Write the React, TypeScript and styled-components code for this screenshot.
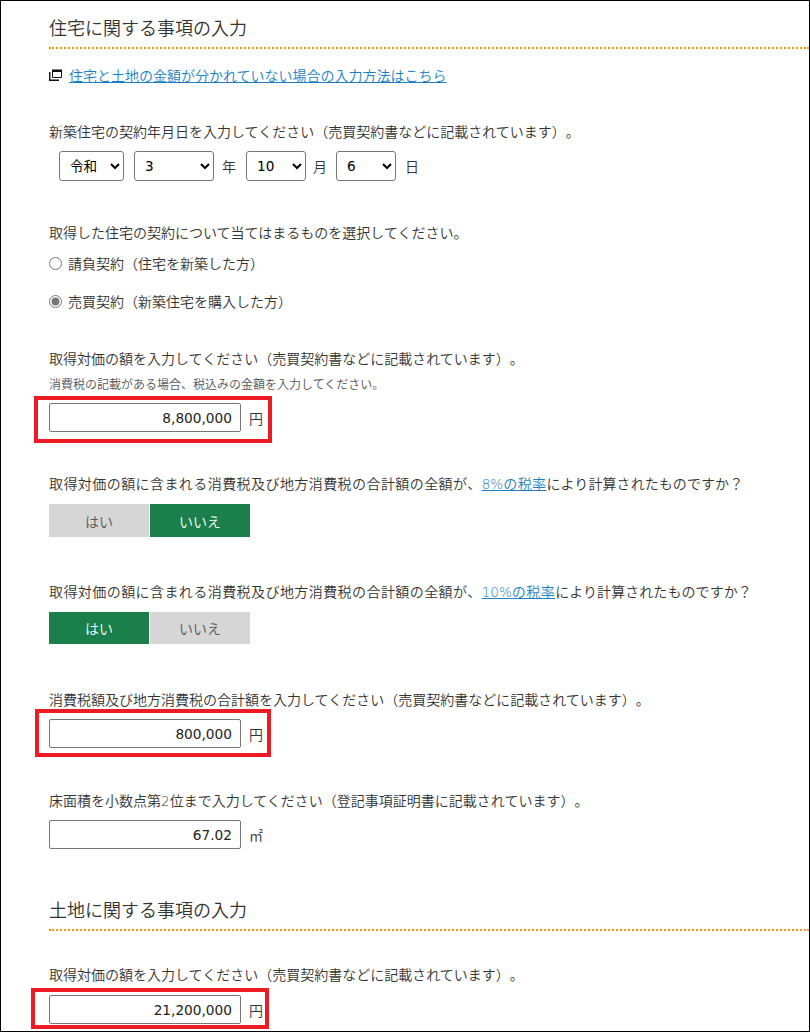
import React from "react";
import styled, { createGlobalStyle } from "styled-components";

const Global = createGlobalStyle`
  html, body { margin: 0; padding: 0; background: #fff; }
  * { box-sizing: border-box; }
`;

const FONT = `"Noto Sans CJK JP", "Noto Sans", sans-serif`;
const NUM_FONT = `"DejaVu Sans", "Noto Sans CJK JP", sans-serif`;

const Frame = styled.main`
  width: 810px;
  height: 1032px;
  border: 1px solid #000;
  overflow: hidden;
  padding-left: 48px;
  font-family: ${FONT};
  font-size: 14px;
  font-weight: 350;
  color: #333;
  background: #fff;
  text-spacing-trim: space-all;
  font-feature-settings: "fwid" 0;
`;

const Heading = styled.h2<{ $top: number }>`
  margin: ${(p) => p.$top}px 0 0;
  height: 36px;
  padding-bottom: 6px;
  line-height: 28px;
  font-size: 18px;
  font-weight: 350;
  color: #333;
  border-bottom: 2px dotted #ee9a00;
`;

const LinkRow = styled.div`
  margin-top: 16px;
  height: 20px;
  display: flex;
  align-items: center;
  gap: 7px;
`;

const Link = styled.a`
  color: #1a7fc4;
  text-decoration: underline;
`;

const Label = styled.p<{ $top: number; $ls?: number }>`
  margin: ${(p) => p.$top}px 0 0;
  line-height: 18px;
  height: 20px;
  white-space: nowrap;
  font-size: 14px;
  letter-spacing: ${(p) => p.$ls ?? 0}px;
`;

const Tail = styled.span`
  letter-spacing: 0.07px;
`;

const Number = styled.span`
  font-family: ${NUM_FONT};
  font-size: 13.6px;
  letter-spacing: 0;
`;

const Sub = styled.p`
  margin: 7px 0 0;
  line-height: 16px;
  height: 16px;
  font-size: 12px;
  color: #555;
`;

const DateRow = styled.div`
  margin-top: 9px;
  padding-left: 10px;
  display: flex;
  align-items: center;
  height: 30px;
`;

const Select = styled.select<{ $w: number; $after: number }>`
  flex: none;
  width: ${(p) => p.$w}px;
  margin-right: ${(p) => p.$after}px;
  height: 30px;
  padding: 0 6px;
  font-family: ${NUM_FONT};
  font-size: 13.6px;
  color: #000;
  background: #fff;
  border: 1px solid #767676;
  border-radius: 3px;
`;

const Unit = styled.span<{ $after?: number }>`
  flex: none;
  width: 14px;
  margin-right: ${(p) => p.$after ?? 0}px;
  font-size: 14px;
  line-height: 20px;
`;

const RadioRow = styled.label<{ $top: number }>`
  margin-top: ${(p) => p.$top}px;
  display: flex;
  align-items: center;
  height: 20px;
  gap: 6px;
  font-size: 14px;
  line-height: 18px;
`;

const Radio = styled.input.attrs({ type: "radio" })`
  margin: 0;
  width: 13px;
  height: 13px;
  accent-color: #767676;
`;

const InputRow = styled.div<{ $top: number }>`
  position: relative;
  margin-top: ${(p) => p.$top}px;
  display: flex;
  align-items: center;
  gap: 8px;
  height: 29px;
`;

const Amount = styled.input.attrs({ type: "text", readOnly: true })`
  width: 192px;
  height: 29px;
  padding: 0 8px;
  text-align: right;
  font-family: ${NUM_FONT};
  font-size: 13.7px;
  color: #222;
  background: #fff;
  border: 1px solid #767676;
  border-radius: 2px;
  outline: none;
`;

const Highlight = styled.div<{ $l: number; $t: number; $w: number; $h: number }>`
  position: absolute;
  left: ${(p) => p.$l}px;
  top: ${(p) => p.$t}px;
  width: ${(p) => p.$w}px;
  height: ${(p) => p.$h}px;
  border: 4px solid #ed1c24;
  pointer-events: none;
`;

const Toggle = styled.div<{ $h: number }>`
  margin-top: 10px;
  display: flex;
  gap: 1px;
  height: ${(p) => p.$h}px;
`;

const ToggleButton = styled.button<{ $on?: boolean }>`
  width: 100px;
  height: 100%;
  padding: 0;
  border: none;
  font-family: ${FONT};
  font-size: 14px;
  font-weight: 350;
  color: ${(p) => (p.$on ? "#fff" : "#555")};
  background: ${(p) => (p.$on ? "#1a7f4b" : "#d6d6d6")};
`;

const WindowIcon = () => (
  <svg width="13" height="12" viewBox="0 0 13 12" fill="none" aria-hidden>
    <path d="M3.5 1.5H12.5V8.5H3.5Z" stroke="#111" strokeWidth="1" />
    <path d="M3 0.5H13V3H3Z" fill="#111" />
    <path d="M0.75 3V11.25H10" stroke="#111" strokeWidth="1.4" />
  </svg>
);

const Pair = ({ on, h }: { on: "yes" | "no"; h: number }) => (
  <Toggle $h={h}>
    <ToggleButton $on={on === "yes"}>はい</ToggleButton>
    <ToggleButton $on={on === "no"}>いいえ</ToggleButton>
  </Toggle>
);

export default function App() {
  return (
    <>
      <Global />
      <Frame>
        <Heading $top={12}>住宅に関する事項の入力</Heading>
        <LinkRow>
          <WindowIcon />
          <Link href="#">住宅と土地の金額が分かれていない場合の入力方法はこちら</Link>
        </LinkRow>

        <Label $top={37}>新築住宅の契約年月日を入力してください（売買契約書などに記載されています）。</Label>
        <DateRow>
          <Select $w={65} $after={10} defaultValue="令和"><option>令和</option></Select>
          <Select $w={80} $after={8} defaultValue="3"><option>3</option></Select>
          <Unit $after={10}>年</Unit>
          <Select $w={60} $after={7} defaultValue="10"><option>10</option></Select>
          <Unit $after={9}>月</Unit>
          <Select $w={60} $after={9} defaultValue="6"><option>6</option></Select>
          <Unit>日</Unit>
        </DateRow>

        <Label $top={42}>取得した住宅の契約について当てはまるものを選択してください。</Label>
        <RadioRow $top={10}>
          <Radio name="contract" />
          請負契約（住宅を新築した方）
        </RadioRow>
        <RadioRow $top={18}>
          <Radio name="contract" defaultChecked />
          売買契約（新築住宅を購入した方）
        </RadioRow>

        <Label $top={38}>取得対価の額を入力してください（売買契約書などに記載されています）。</Label>
        <Sub>消費税の記載がある場合、税込みの金額を入力してください。</Sub>
        <InputRow $top={11}>
          <Amount value="8,800,000" />
          <Unit>円</Unit>
          <Highlight $l={-15} $t={-7} $w={238} $h={47} />
        </InputRow>

        <Label $top={42} $ls={0.43}>
          取得対価の額に含まれる消費税及び地方消費税の合計額の全額が、<Link href="#"><Number>8%</Number>の税率</Link><Tail>により計算されたものですか？</Tail>
        </Label>
        <Pair on="no" h={33} />

        <Label $top={45} $ls={0.43}>
          取得対価の額に含まれる消費税及び地方消費税の合計額の全額が、<Link href="#"><Number>10%</Number>の税率</Link><Tail>により計算されたものですか？</Tail>
        </Label>
        <Pair on="yes" h={32} />

        <Label $top={46}>消費税額及び地方消費税の合計額を入力してください（売買契約書などに記載されています）。</Label>
        <InputRow $top={9}>
          <Amount value="800,000" />
          <Unit>円</Unit>
          <Highlight $l={-14} $t={-10} $w={236} $h={48} />
        </InputRow>

        <Label $top={43}>床面積を小数点第<Number>2</Number>位まで入力してください（登記事項証明書に記載されています）。</Label>
        <InputRow $top={9}>
          <Amount value="67.02" />
          <Unit>㎡</Unit>
        </InputRow>

        <Heading $top={46}>土地に関する事項の入力</Heading>
        <Label $top={34}>取得対価の額を入力してください（売買契約書などに記載されています）。</Label>
        <InputRow $top={10}>
          <Amount value="21,200,000" />
          <Unit>円</Unit>
          <Highlight $l={-18} $t={-7} $w={238} $h={41} />
        </InputRow>
      </Frame>
    </>
  );
}
